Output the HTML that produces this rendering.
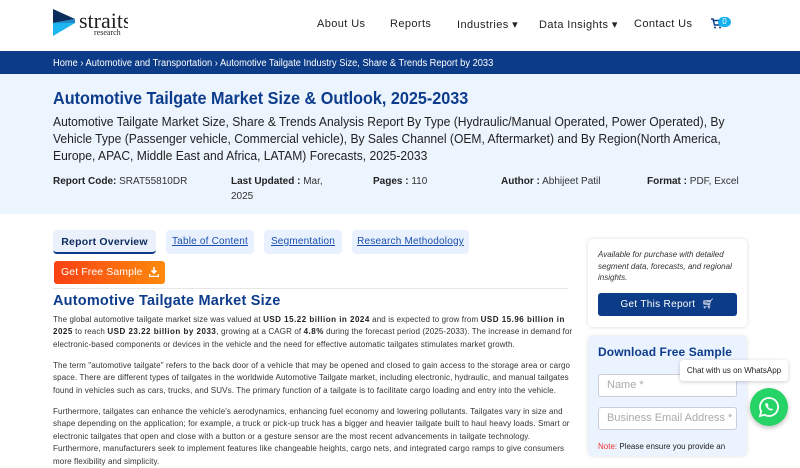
<!DOCTYPE html>
<html><head><meta charset="utf-8"><style>
*{margin:0;padding:0;box-sizing:border-box}
body{width:800px;height:450px;overflow:hidden;font-family:"Liberation Sans",Arial,sans-serif;background:#fff;position:relative;color:#222}
.abs{position:absolute}
.nav a{position:absolute;top:18px;font-size:11px;color:#222;letter-spacing:.4px;white-space:nowrap}
.crumb{top:51px;left:0;width:800px;height:23px;background:#0c3b87}
.hero{top:74px;left:0;width:800px;height:140px;background:#ecf4fe}
.meta{position:absolute;top:174px;font-size:10px;color:#333;line-height:15px}
.meta b{color:#222}
.tab{position:absolute;top:230px;height:24px;background:#e8f1fd;border-radius:4px;font-size:10px;color:#1a4fb0;text-decoration:underline;text-align:center;line-height:24px;letter-spacing:.2px}
p.t{position:absolute;left:53px;width:520px;font-size:8px;line-height:12.4px;color:#333;letter-spacing:.12px}
p.t b{color:#222;letter-spacing:.5px}
.sx{transform-origin:left top;white-space:nowrap}
</style></head><body>
<svg class="abs" style="left:53px;top:9px" width="24" height="28" viewBox="0 0 24 28"><polygon points="0,0 22,10 0,14" fill="#0b2d5c"/><polygon points="0,14 22,14 0,27" fill="#1cb7f0"/><polygon points="0,14 22,10 22,14" fill="#1e88c8"/></svg>
<div class="abs" style="left:79px;top:8px;font-family:'Liberation Serif',serif;font-size:22px;color:#222;width:49px;overflow:hidden;white-space:nowrap">straits</div>
<div class="abs" style="left:94px;top:28px;font-family:'Liberation Serif',serif;font-size:8px;color:#222">research</div>
<div class="nav">
<a style="left:317px">About Us</a><a style="left:390px">Reports</a><a style="left:457px">Industries ▾</a><a style="left:539px">Data Insights ▾</a><a style="left:634px">Contact Us</a>
</div>
<svg class="abs" style="left:711px;top:18px" width="11" height="11" viewBox="0 0 11 11"><path d="M0 1h2l1.5 6h6l1-4.5H3" fill="none" stroke="#0c3b87" stroke-width="1.5"/><circle cx="4" cy="9.5" r="1" fill="#0c3b87"/><circle cx="9" cy="9.5" r="1" fill="#0c3b87"/></svg>
<div class="abs" style="left:718px;top:17px;width:13px;height:10px;border-radius:5px;background:#14b0f0;color:#fff;font-size:8px;text-align:center;line-height:10px">0</div>
<div class="abs crumb"></div>
<div class="abs sx" style="left:53px;top:58px;font-size:10px;color:#fff;transform:scaleX(.93)">Home › Automotive and Transportation › Automotive Tailgate Industry Size, Share &amp; Trends Report by 2033</div>
<div class="abs hero"></div>
<div class="abs sx" style="left:53px;top:88px;font-size:17.5px;font-weight:bold;color:#0d3c8c;transform:scaleX(.925)">Automotive Tailgate Market Size &amp; Outlook, 2025-2033</div>
<div class="abs sx" style="left:53px;top:113px;font-size:13px;line-height:17px;color:#222;transform:scaleX(.93)">Automotive Tailgate Market Size, Share &amp; Trends Analysis Report By Type (Hydraulic/Manual Operated, Power Operated), By<br>Vehicle Type (Passenger vehicle, Commercial vehicle), By Sales Channel (OEM, Aftermarket) and By Region(North America,<br>Europe, APAC, Middle East and Africa, LATAM) Forecasts, 2025-2033</div>
<div class="meta" style="left:53px"><b>Report Code:</b> SRAT55810DR</div>
<div class="meta" style="left:231px;width:110px"><b>Last Updated :</b> Mar, 2025</div>
<div class="meta" style="left:373px"><b>Pages :</b> 110</div>
<div class="meta" style="left:501px"><b>Author :</b> Abhijeet Patil</div>
<div class="meta" style="left:647px"><b>Format :</b> PDF, Excel</div>
<div class="tab" style="left:53px;width:103px;color:#0c2a5e;text-decoration:none;font-weight:bold;font-size:10.5px;border-bottom:2px solid #0c3b87;background:#eaf1fb">Report Overview</div>
<div class="tab" style="left:166px;width:88px">Table of Content</div>
<div class="tab" style="left:264px;width:78px">Segmentation</div>
<div class="tab" style="left:352px;width:117px">Research Methodology</div>
<div class="abs" style="left:54px;top:261px;width:111px;height:23px;border-radius:3px;background:linear-gradient(90deg,#fa4113,#fd8a0c);color:#fff;font-size:10.5px;line-height:23px;padding-left:7px;letter-spacing:.1px">Get Free Sample</div>
<svg class="abs" style="left:149px;top:267px" width="10" height="10" viewBox="0 0 10 10"><path d="M5 0v6M2.5 3.5 5 6l2.5-2.5" fill="none" stroke="#fff" stroke-width="1.6"/><path d="M0.5 7v2.5h9V7" fill="none" stroke="#fff" stroke-width="1.4"/></svg>
<div class="abs" style="left:53px;top:288px;width:515px;height:1px;background:#e6e6e6"></div>
<div class="abs" style="left:53px;top:293px;font-size:14.5px;font-weight:bold;color:#0d3c8c;letter-spacing:.2px">Automotive Tailgate Market Size</div>
<p class="t" style="top:314px">The global automotive tailgate market size was valued at <b>USD 15.22 billion in 2024</b> and is expected to grow from <b>USD 15.96 billion in 2025</b> to reach <b>USD 23.22 billion by 2033</b>, growing at a CAGR of <b>4.8%</b> during the forecast period (2025-2033). The increase in demand for electronic-based components or devices in the vehicle and the need for effective automatic tailgates stimulates market growth.</p>
<p class="t" style="top:360px">The term "automotive tailgate" refers to the back door of a vehicle that may be opened and closed to gain access to the storage area or cargo space. There are different types of tailgates in the worldwide Automotive Tailgate market, including electronic, hydraulic, and manual tailgates found in vehicles such as cars, trucks, and SUVs. The primary function of a tailgate is to facilitate cargo loading and entry into the vehicle.</p>
<p class="t" style="top:406px">Furthermore, tailgates can enhance the vehicle's aerodynamics, enhancing fuel economy and lowering pollutants. Tailgates vary in size and shape depending on the application; for example, a truck or pick-up truck has a bigger and heavier tailgate built to haul heavy loads. Smart or electronic tailgates that open and close with a button or a gesture sensor are the most recent advancements in tailgate technology. Furthermore, manufacturers seek to implement features like changeable heights, cargo nets, and integrated cargo ramps to give consumers more flexibility and simplicity.</p>
<div class="abs" style="left:588px;top:239px;width:159px;height:88px;border-radius:5px;background:#fff;box-shadow:0 0 4px rgba(0,0,0,.15)"></div>
<div class="abs" style="left:598px;top:249px;width:140px;font-size:8px;line-height:11.5px;font-style:italic;color:#333">Available for purchase with detailed segment data, forecasts, and regional insights.</div>
<div class="abs" style="left:598px;top:293px;width:139px;height:23px;border-radius:3px;background:#0c3b87;color:#fff;font-size:10px;text-align:center;line-height:23px;letter-spacing:.3px">Get This Report &nbsp;🛒︎</div>
<div class="abs" style="left:588px;top:336px;width:159px;height:120px;border-radius:5px;background:#ebf3fe;box-shadow:0 0 4px rgba(0,0,0,.12)"></div>
<div class="abs" style="left:598px;top:345px;font-size:12px;font-weight:bold;color:#0d3c8c;letter-spacing:.1px">Download Free Sample</div>
<div class="abs" style="left:598px;top:374px;width:139px;height:23px;border:1px solid #ccd;border-radius:3px;background:#fff;font-size:11px;color:#aaa;line-height:21px;padding-left:8px">Name *</div>
<div class="abs" style="left:598px;top:407px;width:139px;height:23px;border:1px solid #ccd;border-radius:3px;background:#fff;font-size:11px;color:#aaa;line-height:21px;padding-left:8px">Business Email Address *</div>
<div class="abs" style="left:598px;top:442px;font-size:8px;color:#222"><span style="color:#e33">Note:</span> Please ensure you provide an</div>
<div class="abs" style="left:680px;top:360px;width:108px;height:21px;background:#fff;border-radius:3px;box-shadow:0 1px 4px rgba(0,0,0,.2);font-size:8px;line-height:21px;text-align:center;color:#222">Chat with us on WhatsApp</div>
<div class="abs" style="left:750px;top:388px;width:38px;height:38px;border-radius:50%;background:#25d366;box-shadow:0 2px 5px rgba(0,0,0,.25)"></div>
<svg class="abs" style="left:758px;top:396px" width="22" height="22" viewBox="0 0 22 22"><path d="M11 2a9 9 0 0 0-7.8 13.5L2 20l4.6-1.2A9 9 0 1 0 11 2z" fill="none" stroke="#fff" stroke-width="1.8"/><path d="M8 7c-.6.6-1 1.5-.5 2.8.8 2 2.5 3.8 4.7 4.6 1.3.5 2.2 0 2.8-.7l-1.6-1.4-1 .6c-1-.4-2-1.4-2.4-2.4l.6-1L9.2 7z" fill="#fff"/></svg>
</body></html>
